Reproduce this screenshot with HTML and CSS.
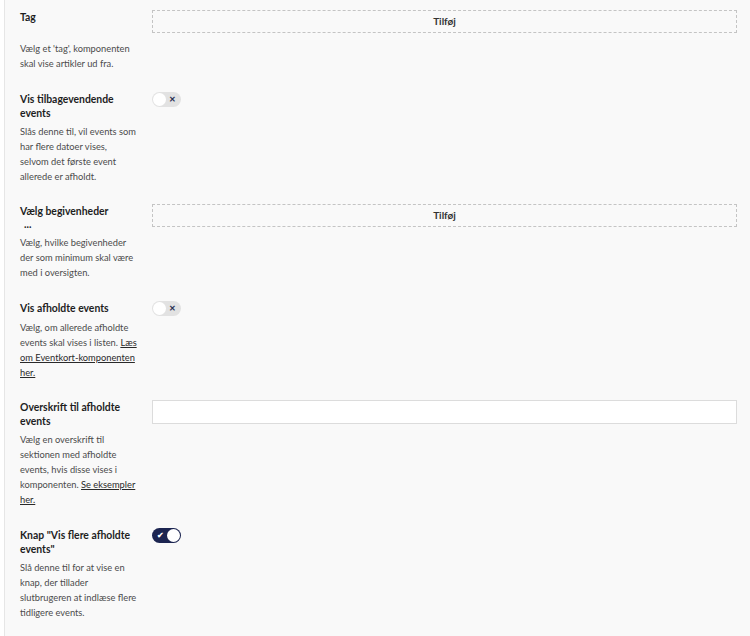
FILE: index.html
```html
<!DOCTYPE html>
<html>
<head>
    <meta charset="utf-8">
    <link rel="stylesheet" href="styles.css">
</head>
<body>
    <div class="panel">

        <div class="field">
            <div class="field-label">Tag</div>
            <div class="field-control">
                <div class="add-box">Tilføj</div>
            </div>
            <div class="field-desc">Vælg et 'tag', komponenten skal vise artikler ud fra.</div>
        </div>

        <div class="field">
            <div class="field-label">Vis tilbagevendende events</div>
            <div class="field-control">
                <span class="toggle"><span class="knob"></span><span class="mark">&#x2715;</span></span>
            </div>
            <div class="field-desc">Slås denne til, vil events som har flere datoer vises, selvom det første event allerede er afholdt.</div>
        </div>

        <div class="field">
            <div class="field-label">Vælg begivenheder<span class="dots">...</span></div>
            <div class="field-control">
                <div class="add-box">Tilføj</div>
            </div>
            <div class="field-desc">Vælg, hvilke begivenheder der som minimum skal være med i oversigten.</div>
        </div>

        <div class="field">
            <div class="field-label">Vis afholdte events</div>
            <div class="field-control">
                <span class="toggle"><span class="knob"></span><span class="mark">&#x2715;</span></span>
            </div>
            <div class="field-desc">Vælg, om allerede afholdte events skal vises i listen. <a href="#">Læs om Eventkort-komponenten her.</a></div>
        </div>

        <div class="field">
            <div class="field-label">Overskrift til afholdte events</div>
            <div class="field-control">
                <input class="text-input" type="text">
            </div>
            <div class="field-desc">Vælg en overskrift til sektionen med afholdte events, hvis disse vises i komponenten. <a href="#">Se eksempler her.</a></div>
        </div>

        <div class="field">
            <div class="field-label">Knap "Vis flere afholdte events"</div>
            <div class="field-control">
                <span class="toggle toggle-on"><span class="mark">&#x2714;</span><span class="knob"></span></span>
            </div>
            <div class="field-desc">Slå denne til for at vise en knap, der tillader slutbrugeren at indlæse flere tidligere events.</div>
        </div>

    </div>
</body>
</html>
```

FILE: styles.css
```css
body {
    margin: 0;
    background: #ffffff;
    font-family: 'Lato', 'Noto Sans', sans-serif;
}

.panel {
    margin-left: 4px;
    min-height: 636px;
    box-sizing: border-box;
    border-left: 1px solid #e6e6e6;
    background: #f9f9f9;
    padding: 10px 13px 0 15px;
}

.field {
    display: grid;
    grid-template-columns: 118px 1fr;
    column-gap: 14px;
    align-items: start;
    padding-bottom: 20.5px;
}

.field-label {
    grid-column: 1;
    font-size: 10.4px;
    font-weight: bold;
    line-height: 14px;
    color: #1e1e1e;
}

.dots {
    display: block;
    margin-left: 4px;
    line-height: 12px;
}

.field-control {
    grid-column: 2;
}

.field-desc {
    grid-column: 1;
    margin-top: 4px;
    font-size: 9.3px;
    line-height: 15px;
    color: #4b4b4b;
}

.field-desc a {
    color: #2a2a2a;
}

.add-box {
    height: 23px;
    box-sizing: border-box;
    margin-bottom: 4px;
    border: 1px dashed #c4c4c4;
    font-size: 10px;
    font-weight: bold;
    color: #333;
    text-align: center;
    line-height: 21px;
}

.text-input {
    display: block;
    width: 100%;
    height: 24px;
    box-sizing: border-box;
    margin: 0;
    border: 1px solid #dcdcdc;
    background: #fff;
}

.toggle {
    display: flex;
    align-items: center;
    justify-content: space-between;
    width: 29px;
    height: 15px;
    box-sizing: border-box;
    padding: 1px 5px 1px 1px;
    border-radius: 8px;
    background: #e2e2e2;
}

.knob {
    width: 13px;
    height: 13px;
    border-radius: 50%;
    background: #fff;
}

.mark {
    font-size: 8px;
    font-weight: bold;
    color: #2b3252;
}

.toggle-on {
    padding: 1px 1px 1px 5px;
    background: #1c2551;
}

.toggle-on .mark {
    color: #fff;
}
```
